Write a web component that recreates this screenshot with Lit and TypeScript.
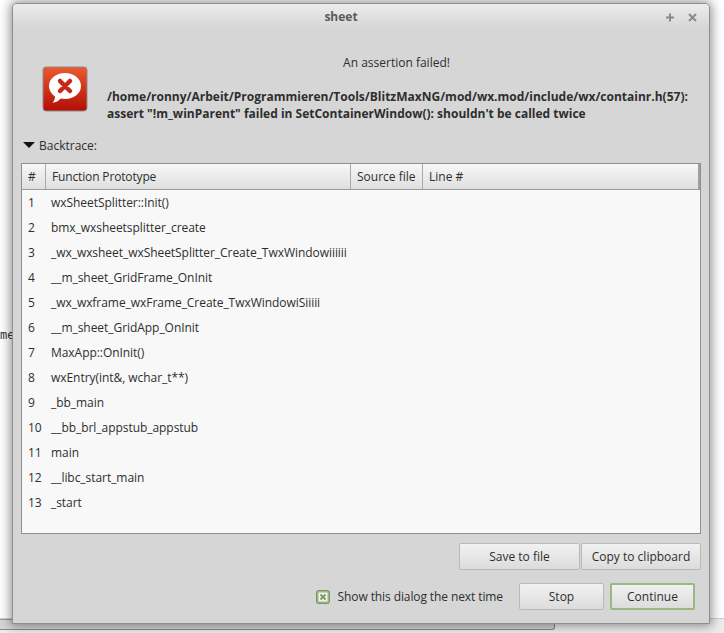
import { LitElement, html, css, svg } from "lit";
import { customElement } from "lit/decorators.js";

const ROWS = [
  "wxSheetSplitter::Init()",
  "bmx_wxsheetsplitter_create",
  "_wx_wxsheet_wxSheetSplitter_Create_TwxWindowiiiiii",
  "__m_sheet_GridFrame_OnInit",
  "_wx_wxframe_wxFrame_Create_TwxWindowiSiiiii",
  "__m_sheet_GridApp_OnInit",
  "MaxApp::OnInit()",
  "wxEntry(int&, wchar_t**)",
  "_bb_main",
  "__bb_brl_appstub_appstub",
  "main",
  "__libc_start_main",
  "_start",
];

@customElement("app-root")
export class AppRoot extends LitElement {
  static styles = css`
    :host {
      display: block;
      position: relative;
      width: 724px;
      height: 633px;
      overflow: hidden;
      background: #fff;
      font-family: "Open Sans", "Noto Sans", sans-serif;
      font-size: 12px;
      color: #2e2e2e;
    }
    .under {
      position: absolute;
      left: 0;
      right: 0;
      top: 618px;
      bottom: 0;
      background: #ececec;
      border-top: 1px solid #cfcfcf;
    }
    .behind {
      position: absolute;
      left: -10px;
      top: 619px;
      width: 565px;
      height: 11px;
      box-sizing: border-box;
      border-top: 1px solid #9a9a9a;
      border-right: 1px solid #8a8a8a;
      border-bottom: 1px solid #8a8a8a;
      border-radius: 0 0 3px 0;
      background: #d6d6d6;
    }
    .peek {
      position: absolute;
      left: 0;
      top: 328px;
      font-family: "DejaVu Sans Mono", monospace;
      font-size: 12px;
      line-height: 14px;
      color: #333;
    }
    .win {
      position: absolute;
      left: 12px;
      top: 3px;
      width: 698px;
      height: 621px;
      box-sizing: border-box;
      border: 1px solid #8e8e8e;
      border-radius: 5px 5px 0 0;
      background: #d6d6d6;
      box-shadow: 0 0 11px 2px rgba(0, 0, 0, 0.42);
      display: flex;
      flex-direction: column;
    }
    .titlebar {
      height: 24px;
      flex: none;
      display: flex;
      align-items: center;
      justify-content: center;
      position: relative;
      box-sizing: border-box;
      padding-right: 40px;
      background: linear-gradient(#ececec, #d6d6d6);
      border-radius: 4px 4px 0 0;
      font-weight: 700;
      font-size: 12px;
      color: #5a5a5a;
    }
    .wbtns {
      position: absolute;
      right: 0;
      top: 0;
      width: 44px;
      height: 24px;
    }
    .wbtns svg {
      display: block;
    }
    .body {
      flex: 1;
      display: flex;
      flex-direction: column;
      padding: 0 8px;
      min-height: 0;
    }
    .msg {
      display: flex;
      height: 100px;
      flex: none;
    }
    .icon {
      width: 46px;
      height: 46px;
      margin: 38px 19px 0 21px;
      flex: none;
    }
    .msgtext {
      flex: 1;
      padding-top: 26px;
      line-height: 18px;
    }
    .msgtitle {
      text-align: center;
      margin: 0 0 16px 0;
      height: 18px;
      padding-right: 15px;
    }
    .msgdetail {
      font-weight: 700;
      line-height: 17px;
      white-space: nowrap;
    }
    .bt {
      display: flex;
      align-items: center;
      height: 18px;
      margin: 8px 0 9px 0;
      padding-left: 2px;
      gap: 4px;
      flex: none;
    }
    .tri {
      width: 0;
      height: 0;
      border-left: 6px solid transparent;
      border-right: 6px solid transparent;
      border-top: 6px solid #111;
      margin-top: -1px;
    }
    .table {
      height: 371px;
      flex: none;
      width: 680px;
      box-sizing: border-box;
      border: 1px solid #8f8f8f;
      background: #f8f8f8;
      display: flex;
      flex-direction: column;
    }
    .thead {
      height: 26px;
      flex: none;
      display: flex;
      box-sizing: border-box;
      border-bottom: 1px solid #9a9a9a;
      background: linear-gradient(#f7f7f7, #dfdfdf);
    }
    .th {
      box-sizing: border-box;
      display: flex;
      align-items: center;
      padding-left: 6px;
      border-right: 1px solid #a8a8a8;
    }
    .th:last-child {
      border-right: 0;
      flex: 1;
      box-shadow: inset -2px 0 0 #9f9f9f;
    }
    .c0 { width: 24px; }
    .c1 { width: 305px; letter-spacing: -0.15px; }
    .c2 { width: 72px; }
    .row {
      display: flex;
      height: 25px;
      align-items: center;
      white-space: nowrap;
    }
    .row .n {
      width: 24px;
      box-sizing: border-box;
      padding-left: 6px;
      flex: none;
    }
    .row .f {
      padding-left: 5px;
      letter-spacing: -0.05px;
    }
    .tools {
      display: flex;
      justify-content: flex-end;
      margin-top: 9px;
      flex: none;
      width: 680px;
      gap: 1px;
    }
    .btn {
      box-sizing: border-box;
      height: 27px;
      border: 1px solid #b9b9b9;
      border-radius: 2px;
      background: linear-gradient(#f1f1f1, #dcdcdc);
      display: flex;
      align-items: center;
      justify-content: center;
      font: inherit;
      color: inherit;
      padding: 0;
    }
    .w120 { width: 120px; }
    .w121 { width: 121px; }
    .w85 { width: 85px; }
    .footer {
      display: flex;
      align-items: center;
      margin-top: 13px;
      flex: none;
      width: 674px;
    }
    .check {
      display: flex;
      align-items: center;
      margin-left: auto;
      margin-right: 16px;
      gap: 8px;
      letter-spacing: -0.1px;
    }
    .box {
      width: 14px;
      height: 14px;
      display: block;
    }
    .default {
      border: 2px solid #9ab87f;
      margin-left: 6px;
    }
  `;

  render() {
    return html`
      <div class="under"></div>
      <div class="behind"></div>
      <div class="peek">me</div>
      <div class="win">
        <div class="titlebar">
          sheet
          <div class="wbtns">
            <svg width="44" height="24" viewBox="0 0 44 24">
              <path d="M5 9.500v8M1 13.500h8" stroke="#8a8a8a" stroke-width="2" fill="none"/>
              <path d="M24 10l7 7M31 10l-7 7" stroke="#8a8a8a" stroke-width="2" fill="none"/>
            </svg>
          </div>
        </div>
        <div class="body">
          <div class="msg">
            <svg class="icon" viewBox="0 0 46 46">
              ${this.errIcon()}
            </svg>
            <div class="msgtext">
              <div class="msgtitle">An assertion failed!</div>
              <div class="msgdetail">
                /home/ronny/Arbeit/Programmieren/Tools/BlitzMaxNG/mod/wx.mod/include/wx/containr.h(57):<br />
                assert "!m_winParent" failed in SetContainerWindow(): shouldn't be called twice
              </div>
            </div>
          </div>
          <div class="bt"><span class="tri"></span>Backtrace:</div>
          <div class="table">
            <div class="thead">
              <div class="th c0">#</div>
              <div class="th c1">Function Prototype</div>
              <div class="th c2">Source file</div>
              <div class="th">Line #</div>
            </div>
            <div class="rows">
              ${ROWS.map(
                (r, i) => html`<div class="row"><span class="n">${i + 1}</span><span class="f">${r}</span></div>`
              )}
            </div>
          </div>
          <div class="tools">
            <button class="btn w121">Save to file</button>
            <button class="btn w120">Copy to clipboard</button>
          </div>
          <div class="footer">
            <div class="check">
              <svg class="box" viewBox="0 0 14 14">
                <rect x="0.5" y="0.5" width="13" height="13" rx="2" fill="#9ab87f" stroke="#7c8f6c"/>
                <rect x="2.500" y="2.500" width="9" height="9" fill="#f2f2f2"/>
                <path d="M4.500 4.500l5 5M9.500 4.500l-5 5" stroke="#7f9a68" stroke-width="2"/>
              </svg>
              Show this dialog the next time
            </div>
            <button class="btn w85">Stop</button>
            <button class="btn w85 default">Continue</button>
          </div>
        </div>
      </div>
    `;
  }

  errIcon() {
    return svg`
      <defs>
        <linearGradient id="rg" x1="0" y1="0" x2="0" y2="1">
          <stop offset="0" stop-color="#ea5a30"/>
          <stop offset="1" stop-color="#b30d05"/>
        </linearGradient>
      </defs>
      <rect x="1" y="1" width="44" height="44" rx="3" fill="url(#rg)" stroke="#8d8d8d" stroke-width="1"/>
      <path d="M23 7c9 0 16 5.600 16 13s-7 13-16 13c-1.500 0-3-.2-4.300-.5-1.800 2.300-4.700 4-8.200 4.300 1.600-1.700 2.500-3.600 2.500-6.300C9.700 28 7 24.300 7 20 7 12.600 14 7 23 7z" fill="#fff"/>
      <path d="M18 15l5 5M28 15l-5 5M18 25l5-5M28 25l-5-5" stroke="#c8281a" stroke-width="4.500" stroke-linecap="round"/>
    `;
  }
}
